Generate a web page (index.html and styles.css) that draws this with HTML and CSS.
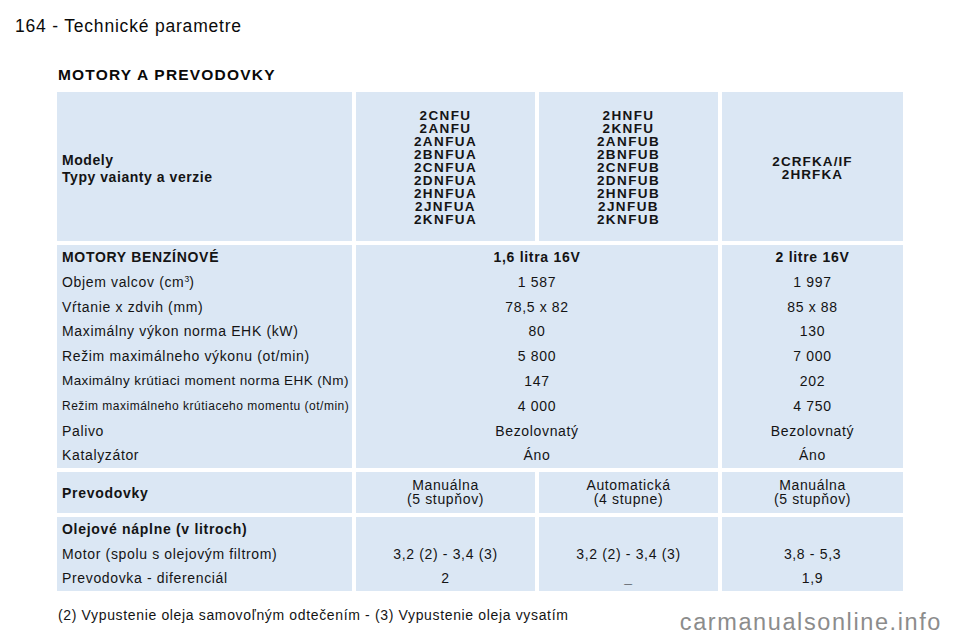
FILE: index.html
```html
<!DOCTYPE html>
<html lang="sk">
<head>
<meta charset="utf-8">
<title>164 - Technické parametre</title>
<link rel="stylesheet" href="styles.css">
</head>
<body>
<div class="page">
  <h1 class="page-title">164 - Technické parametre</h1>
  <h2 class="section-title">MOTORY A PREVODOVKY</h2>
  <div class="spec-table">
    <!-- Row 1: models -->
    <div class="cell label-cell models-label">
      <div>Modely</div>
      <div>Typy vaianty a verzie</div>
    </div>
    <div class="cell center codes">
      <div>2CNFU</div><div>2ANFU</div><div>2ANFUA</div><div>2BNFUA</div><div>2CNFUA</div><div>2DNFUA</div><div>2HNFUA</div><div>2JNFUA</div><div>2KNFUA</div>
    </div>
    <div class="cell center codes">
      <div>2HNFU</div><div>2KNFU</div><div>2ANFUB</div><div>2BNFUB</div><div>2CNFUB</div><div>2DNFUB</div><div>2HNFUB</div><div>2JNFUB</div><div>2KNFUB</div>
    </div>
    <div class="cell center codes codes-short">
      <div>2CRFKA/IF</div><div>2HRFKA</div>
    </div>

    <!-- Row 2: petrol engines -->
    <div class="cell label-cell lines">
      <div class="bold">MOTORY BENZÍNOVÉ</div>
      <div>Objem valcov (cm<sup>3</sup>)</div>
      <div>Vŕtanie x zdvih (mm)</div>
      <div>Maximálny výkon norma EHK (kW)</div>
      <div>Režim maximálneho výkonu (ot/min)</div>
      <div class="tight">Maximálny krútiaci moment norma EHK (Nm)</div>
      <div class="tighter">Režim maximálneho krútiaceho momentu (ot/min)</div>
      <div>Palivo</div>
      <div>Katalyzátor</div>
    </div>
    <div class="cell lines center span2">
      <div class="bold">1,6 litra 16V</div>
      <div>1 587</div>
      <div>78,5 x 82</div>
      <div>80</div>
      <div>5 800</div>
      <div>147</div>
      <div>4 000</div>
      <div>Bezolovnatý</div>
      <div>Áno</div>
    </div>
    <div class="cell lines center">
      <div class="bold">2 litre 16V</div>
      <div>1 997</div>
      <div>85 x 88</div>
      <div>130</div>
      <div>7 000</div>
      <div>202</div>
      <div>4 750</div>
      <div>Bezolovnatý</div>
      <div>Áno</div>
    </div>

    <!-- Row 3: gearboxes -->
    <div class="cell label-cell middle">
      <div class="bold">Prevodovky</div>
    </div>
    <div class="cell center middle small-lines">
      <div>Manuálna</div><div>(5 stupňov)</div>
    </div>
    <div class="cell center middle small-lines">
      <div>Automatická</div><div>(4 stupne)</div>
    </div>
    <div class="cell center middle small-lines">
      <div>Manuálna</div><div>(5 stupňov)</div>
    </div>

    <!-- Row 4: oil capacities -->
    <div class="cell label-cell lines oil">
      <div class="bold">Olejové náplne (v litroch)</div>
      <div>Motor (spolu s olejovým filtrom)</div>
      <div>Prevodovka - diferenciál</div>
    </div>
    <div class="cell lines center oil">
      <div>&nbsp;</div>
      <div>3,2 (2) - 3,4 (3)</div>
      <div>2</div>
    </div>
    <div class="cell lines center oil">
      <div>&nbsp;</div>
      <div>3,2 (2) - 3,4 (3)</div>
      <div class="dash">_</div>
    </div>
    <div class="cell lines center oil">
      <div>&nbsp;</div>
      <div>3,8 - 5,3</div>
      <div>1,9</div>
    </div>
  </div>
  <p class="footnote">(2) Vypustenie oleja samovoľným odtečením - (3) Vypustenie oleja vysatím</p>
  <span class="watermark">carmanualsonline.info</span>
</div>
</body>
</html>
```

FILE: styles.css
```css
* { box-sizing: border-box; }
html, body { margin: 0; padding: 0; background: #ffffff; }
body {
  font-family: "Liberation Sans", Arial, Helvetica, sans-serif;
  color: #141414;
  width: 960px;
  height: 640px;
  overflow: hidden;
}
.page {
  position: relative;
  width: 960px;
  height: 640px;
  padding: 15px 0 0 15px;
}
.page-title {
  margin: 0;
  font-size: 17.5px;
  font-weight: normal;
  letter-spacing: 0.8px;
  line-height: 22px;
  color: #0a0a0a;
}
.section-title {
  margin: 30px 0 0 43px;
  font-size: 15.5px;
  line-height: 16px;
  font-weight: bold;
  letter-spacing: 1.2px;
  color: #0a0a0a;
}
.spec-table {
  display: grid;
  grid-template-columns: 295px 179px 179px 181px;
  grid-template-rows: 149px auto 41px auto;
  gap: 4px;
  margin: 9px 0 0 42px;
  width: 846px;
}
.cell {
  background: #dbe7f4;
  font-size: 14px;
  letter-spacing: 0.65px;
  color: #141414;
}
.label-cell { padding-left: 5px; }
.center { text-align: center; }
.bold {
  font-weight: bold;
  font-size: 14px;
  letter-spacing: 0.7px;
}
.models-label {
  display: flex;
  flex-direction: column;
  justify-content: center;
  font-weight: bold;
  font-size: 14px;
  letter-spacing: 0.55px;
  line-height: 17px;
  padding-top: 4px;
}
.codes {
  display: flex;
  flex-direction: column;
  justify-content: center;
  font-weight: bold;
  font-size: 13.5px;
  line-height: 13px;
  letter-spacing: 1.4px;
  padding-top: 2px;
}
.codes-short { letter-spacing: 1.1px; }
.lines { line-height: 24.8px; }
.span2 { grid-column: span 2; }
.tight { font-size: 13.5px; letter-spacing: 0.4px; }
.tighter { font-size: 12px; letter-spacing: 0.5px; }
sup {
  font-size: 8.5px;
  line-height: 0;
  vertical-align: 5px;
  letter-spacing: 0;
}
.middle {
  display: flex;
  flex-direction: column;
  justify-content: center;
}
.small-lines {
  font-size: 14px;
  line-height: 13.5px;
  letter-spacing: 0.65px;
}
.oil { line-height: 24.5px; }
.dash { font-weight: bold; }
.footnote {
  margin: 15px 0 0 43px;
  font-size: 14px;
  letter-spacing: 0.65px;
  line-height: 18px;
  color: #141414;
}
.watermark {
  position: absolute;
  right: 18px;
  top: 609px;
  font-size: 23.5px;
  letter-spacing: 1.6px;
  color: #8c8c8c;
  line-height: 26px;
}
```
